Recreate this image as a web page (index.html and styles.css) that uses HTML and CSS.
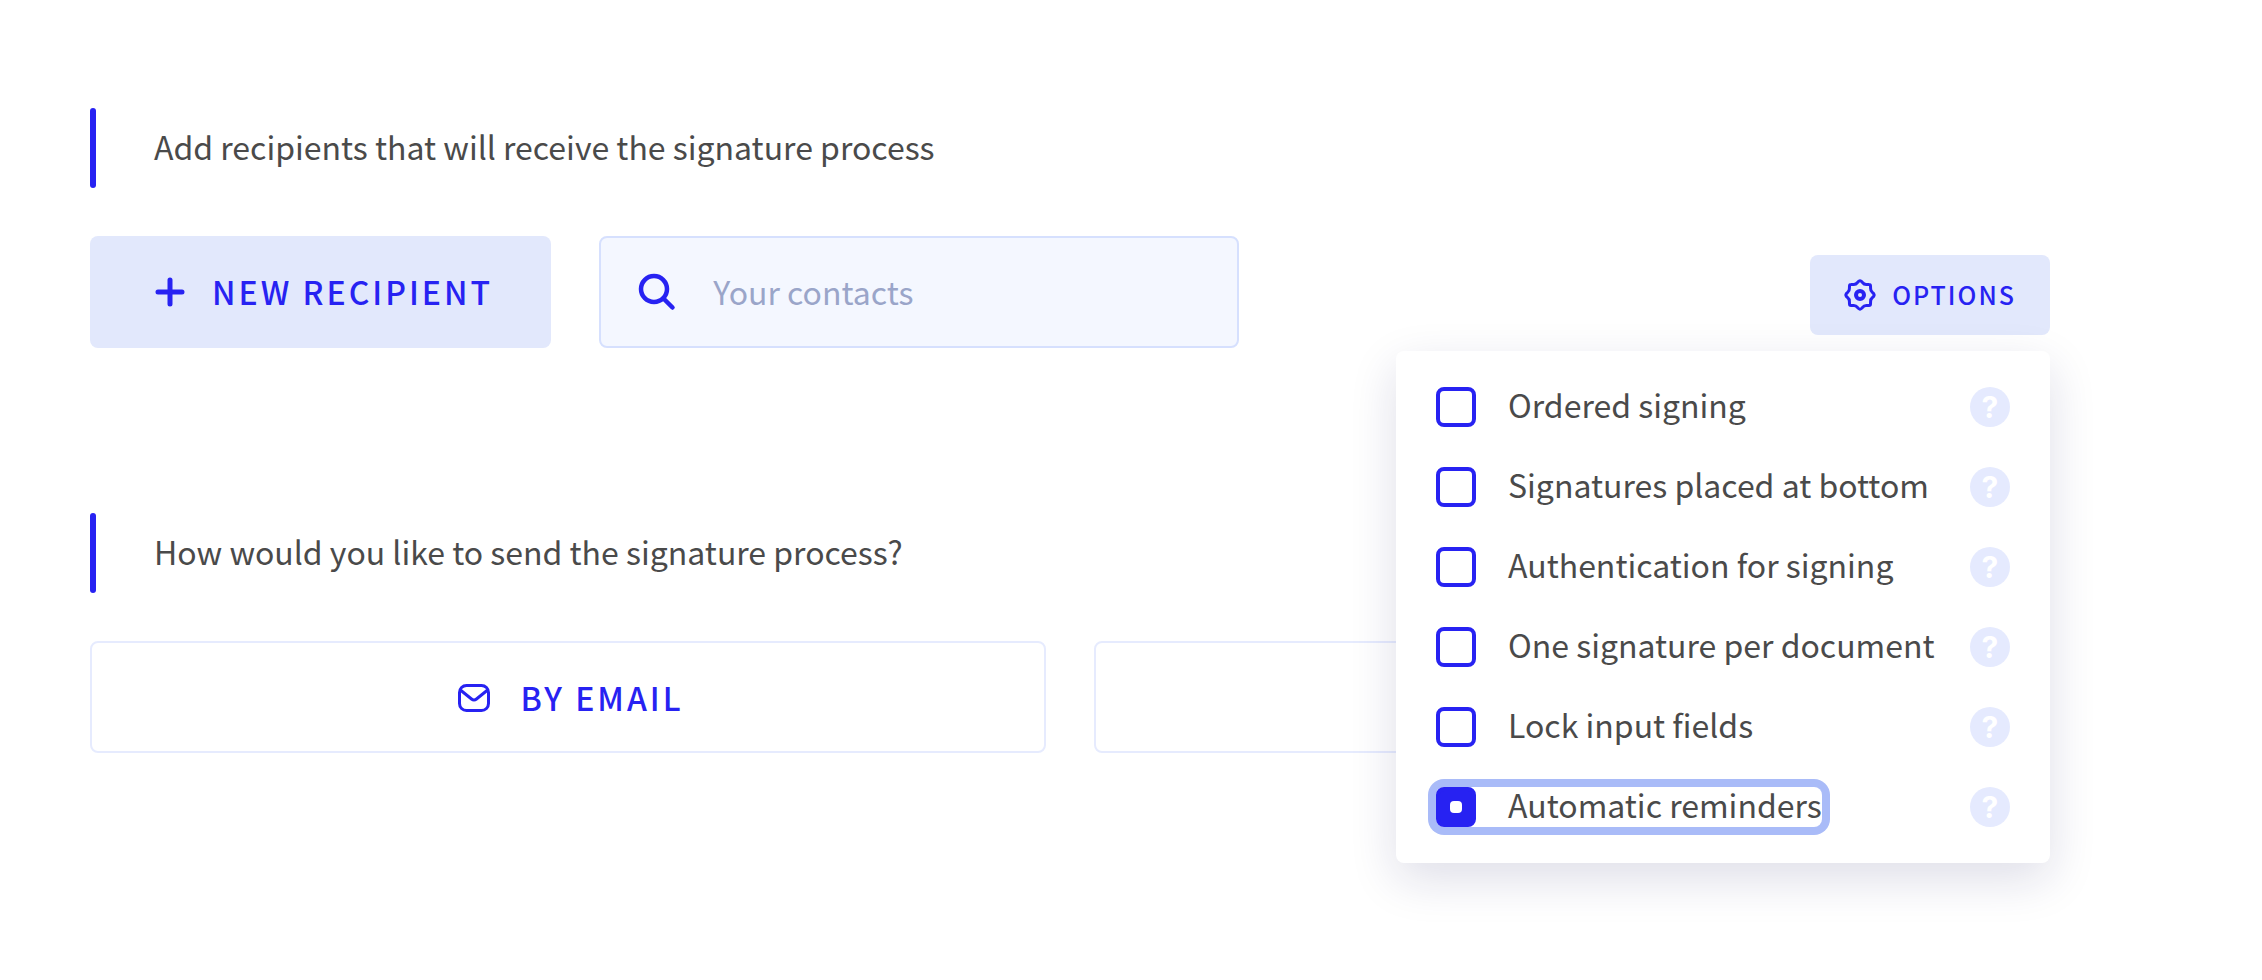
FILE: index.html
```html
<!DOCTYPE html>
<html lang="en">
<head>
<meta charset="utf-8">
<title>Signature process</title>
<link rel="stylesheet" href="styles.css">
</head>
<body>
<main class="page">
  <section class="section">
    <h2 class="heading">Add recipients that will receive the signature process</h2>
    <div class="toolbar">
      <button class="btn btn-primary" type="button">
        <svg class="icon" viewBox="0 0 32 32" aria-hidden="true"><path d="M16 4v24M4 16h24" stroke-width="5"/></svg>
        <span class="btn-label">New recipient</span>
      </button>
      <label class="search">
        <svg class="icon icon-search" viewBox="0 0 40 40" aria-hidden="true"><circle cx="17" cy="17" r="13" stroke-width="4.500"/><path d="M26.500 26.500L35.500 35.500" stroke-width="4.500"/></svg>
        <input class="search-input" type="text" placeholder="Your contacts">
      </label>
      <div class="options">
        <button class="btn btn-small" type="button">
          <svg class="icon" viewBox="0 0 32 32" aria-hidden="true"><path d="M16 1.800Q17.500 2 18.500 3.500Q20 5.500 22.500 5.400L25 5.500Q26.500 5.500 26.500 7L26.600 9.500Q26.500 12 28.500 13.500Q30 14.500 30.200 16Q30 17.500 28.500 18.500Q26.500 20 26.600 22.500L26.500 25Q26.500 26.500 25 26.500L22.500 26.600Q20 26.500 18.500 28.500Q17.500 30 16 30.200Q14.500 30 13.500 28.500Q12 26.500 9.500 26.600L7 26.500Q5.500 26.500 5.500 25L5.400 22.500Q5.500 20 3.500 18.500Q2 17.500 1.800 16Q2 14.500 3.500 13.500Q5.500 12 5.400 9.500L5.500 7Q5.500 5.500 7 5.500L9.500 5.400Q12 5.500 13.500 3.500Q14.500 2 16 1.800z" stroke-width="3"/><circle cx="16" cy="16" r="4" stroke-width="4"/></svg>
          <span class="btn-label">Options</span>
        </button>
        <ul class="menu">
          <li class="menu-item"><label class="check"><input class="box" type="checkbox">Ordered signing</label><button class="help" type="button">?</button></li>
          <li class="menu-item"><label class="check"><input class="box" type="checkbox">Signatures placed at bottom</label><button class="help" type="button">?</button></li>
          <li class="menu-item"><label class="check"><input class="box" type="checkbox">Authentication for signing</label><button class="help" type="button">?</button></li>
          <li class="menu-item"><label class="check"><input class="box" type="checkbox">One signature per document</label><button class="help" type="button">?</button></li>
          <li class="menu-item"><label class="check"><input class="box" type="checkbox">Lock input fields</label><button class="help" type="button">?</button></li>
          <li class="menu-item"><label class="check check-focus"><input class="box" type="checkbox" checked>Automatic reminders</label><button class="help" type="button">?</button></li>
        </ul>
      </div>
    </div>
  </section>
  <section class="section">
    <h2 class="heading">How would you like to send the signature process?</h2>
    <div class="methods">
      <button class="btn btn-outline" type="button">
        <svg class="icon" viewBox="0 0 32 32" aria-hidden="true"><rect x="1.500" y="4.500" width="29" height="25" rx="7" stroke-width="3"/><path d="M3 9.500l10.500 8.500q2.500 2 5 0L29 9.500" stroke-width="3"/></svg>
        <span>By email</span>
      </button>
      <button class="btn btn-outline" type="button"></button>
    </div>
  </section>
</main>
</body>
</html>
```
FILE: styles.css
```css
* {
  box-sizing: border-box;
}

body {
  margin: 0;
  background: #fff;
  color: #4a4a4a;
  font-family: "Noto Sans CJK SC", "Noto Sans", sans-serif;
  font-size: 32px;
  line-height: 40px;
}

.page {
  display: flex;
  flex-direction: column;
  gap: 165px;
  min-height: 100vh;
  padding: 108px 212px 108px 90px;
}

.section {
  display: flex;
  flex-direction: column;
  gap: 48px;
}

.heading {
  display: flex;
  gap: 58px;
  margin: 0;
  font-size: 32px;
  font-weight: 400;
  line-height: 76px;
}

.heading::before {
  content: "";
  width: 6px;
  height: 80px;
  border-radius: 3px;
  background: #2722f2;
}

.toolbar {
  display: flex;
  gap: 48px;
}

.btn {
  display: flex;
  align-items: center;
  justify-content: center;
  gap: 26px;
  height: 112px;
  padding: 0 58px 0 64px;
  border: 0;
  border-radius: 8px;
  color: #2722f2;
  font: inherit;
  font-weight: 500;
  letter-spacing: 3px;
  text-transform: uppercase;
  white-space: nowrap;
}

.btn-primary,
.btn-small {
  background: #e2e8fc;
}

.btn-small {
  gap: 16px;
  height: 80px;
  padding: 0 34px;
  font-size: 25px;
  letter-spacing: 2px;
}

.btn-outline {
  gap: 30px;
  border: 2px solid #e6ebfe;
  background: #fff;
}

.btn-label {
  padding-bottom: 3px;
}

.icon {
  flex: none;
  width: 32px;
  height: 32px;
  fill: none;
  stroke: #2722f2;
  stroke-linecap: round;
  stroke-linejoin: round;
}

.icon-search {
  width: 40px;
  height: 40px;
}

.search {
  display: flex;
  flex: 0 1 640px;
  align-items: center;
  gap: 36px;
  height: 112px;
  padding: 0 36px;
  border: 2px solid #d6e0fe;
  border-radius: 8px;
  background: #f4f7ff;
}

.search-input {
  flex: 1;
  min-width: 0;
  padding: 0 0 2px;
  border: 0;
  outline: 0;
  background: transparent;
  color: #4a4a4a;
  font: inherit;
}

.search-input::placeholder {
  color: #9aa5c9;
  opacity: 1;
}

.options {
  position: relative;
  margin-left: auto;
  padding-top: 19px;
}

.menu {
  position: absolute;
  top: 115px;
  right: 0;
  display: flex;
  flex-direction: column;
  gap: 40px;
  width: 654px;
  margin: 0;
  padding: 36px 40px;
  border-radius: 8px;
  background: #fff;
  box-shadow: 0 16px 48px rgba(20, 24, 90, 0.14);
  list-style: none;
}

.menu-item {
  display: flex;
  align-items: center;
  justify-content: space-between;
}

.check {
  display: flex;
  gap: 32px;
  border-radius: 8px;
  line-height: 34px;
  white-space: nowrap;
}

.check-focus {
  box-shadow: 0 0 0 8px #a9bbf8;
}

.box {
  display: grid;
  place-items: center;
  width: 40px;
  height: 40px;
  margin: 0;
  border: 4px solid #2722f2;
  border-radius: 8px;
  appearance: none;
}

.box:checked {
  background: #2722f2;
}

.box:checked::before {
  content: "";
  width: 12px;
  height: 12px;
  border-radius: 4px;
  background: #fff;
}

.help {
  width: 40px;
  height: 40px;
  padding: 0;
  border: 0;
  border-radius: 50%;
  background: #e5eafe;
  color: #fff;
  font-family: Inter, sans-serif;
  font-size: 30px;
  font-weight: 700;
  line-height: 40px;
}

.methods {
  display: grid;
  grid-template-columns: 1fr 1fr;
  gap: 48px;
}
```
